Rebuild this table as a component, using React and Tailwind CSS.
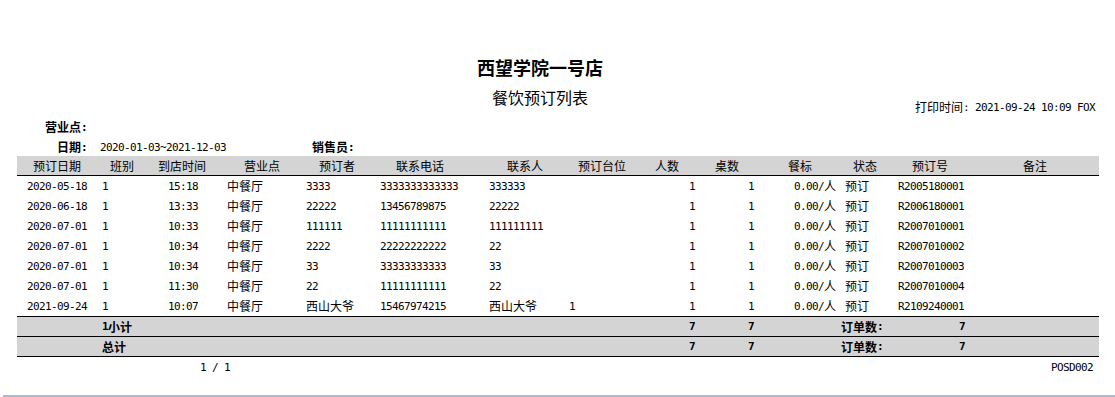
import React from "react";

const MONO = "font-['DejaVu_Sans_Mono',monospace] text-[11px] tracking-[-0.62px] leading-none whitespace-pre";
const CJK = "font-['Noto_Sans_CJK_SC',sans-serif] text-[12px] leading-none whitespace-pre";

function T({ s }) {
  const runs = [];
  let cur = "";
  let curA = null;
  for (const ch of s) {
    const a = ch.charCodeAt(0) < 128;
    if (curA === null || a === curA) {
      cur += ch;
      curA = a;
    } else {
      runs.push([cur, curA]);
      cur = ch;
      curA = a;
    }
  }
  if (cur) runs.push([cur, curA]);
  return (
    <>
      {runs.map(([t, a], i) => (
        <span key={i} className={a ? MONO : CJK}>
          {t}
        </span>
      ))}
    </>
  );
}

const rows = [
  ["2020-05-18", "1", "15:18", "中餐厅", "3333", "3333333333333", "333333", "", "1", "1", "0.00/人", "预订", "R2005180001"],
  ["2020-06-18", "1", "13:33", "中餐厅", "22222", "13456789875", "22222", "", "1", "1", "0.00/人", "预订", "R2006180001"],
  ["2020-07-01", "1", "10:33", "中餐厅", "111111", "11111111111", "111111111", "", "1", "1", "0.00/人", "预订", "R2007010001"],
  ["2020-07-01", "1", "10:34", "中餐厅", "2222", "22222222222", "22", "", "1", "1", "0.00/人", "预订", "R2007010002"],
  ["2020-07-01", "1", "10:34", "中餐厅", "33", "33333333333", "33", "", "1", "1", "0.00/人", "预订", "R2007010003"],
  ["2020-07-01", "1", "11:30", "中餐厅", "22", "11111111111", "22", "", "1", "1", "0.00/人", "预订", "R2007010004"],
  ["2021-09-24", "1", "10:07", "中餐厅", "西山大爷", "15467974215", "西山大爷", "1", "1", "1", "0.00/人", "预订", "R2109240001"],
];

const dataCells = [
  "w-[80px] pl-[10px]",
  "w-[50px] pl-[5px]",
  "w-[70px] pr-[19px] justify-end",
  "w-[83px] pl-[10px]",
  "w-[77px] pl-[6px]",
  "w-[110px] pl-[3px]",
  "w-[76px] pl-[2px]",
  "w-[77px] pl-[6px]",
  "w-[55px] justify-end",
  "w-[59px] justify-end",
  "w-[88px] pl-[40px]",
  "w-[55px] pl-[3px]",
  "flex-1 pl-[1px]",
];

const headers = [
  ["预订日期", "w-[80px]"],
  ["班别", "w-[50px]"],
  ["到店时间", "w-[70px]"],
  ["营业点", "w-[90px]"],
  ["预订者", "w-[60px]"],
  ["联系电话", "w-[106px]"],
  ["联系人", "w-[104px]"],
  ["预订台位", "w-[50px]"],
  ["人数", "w-[80px]"],
  ["桌数", "w-[40px]"],
  ["餐标", "w-[106px]"],
  ["状态", "w-[24px]"],
  ["预订号", "w-[106px]"],
  ["备注", "w-[104px]"],
];

function SummaryRow({ label, top }) {
  return (
    <div
      className={
        "flex items-center bg-[#d4d4d4] border-b border-black font-bold " +
        (top ? "border-t h-[21px]" : "h-[20px]")
      }
    >
      <div className="w-[85px] shrink-0" />
      <div className="w-[538px] shrink-0 flex items-center">
        <T s={label} />
      </div>
      <div className="w-[55px] shrink-0 flex items-center justify-end">
        <T s="7" />
      </div>
      <div className="w-[59px] shrink-0 flex items-center justify-end">
        <T s="7" />
      </div>
      <div className="w-[87px] shrink-0" />
      <div className="w-[70px] shrink-0 flex items-center">
        <T s="订单数:" />
      </div>
      <div className="w-[54px] shrink-0 flex items-center justify-end">
        <T s="7" />
      </div>
    </div>
  );
}

export default function App() {
  return (
    <div className="w-[1115px] h-[397px] bg-white text-black overflow-hidden flex flex-col font-['Noto_Sans_CJK_SC',sans-serif]">
      {/* Title */}
      <div className="flex mt-[57px] h-[20px] items-center">
        <div className="w-[360px] shrink-0" />
        <div className="w-[360px] shrink-0 text-center text-[18px] leading-none font-bold">西望学院一号店</div>
      </div>

      {/* Subtitle + print time */}
      <div className="flex mt-[10px] items-start">
        <div className="w-[360px] shrink-0" />
        <div className="w-[360px] shrink-0 h-[20px] flex items-center justify-center text-[16px] leading-none">
          餐饮预订列表
        </div>
        <div className="flex-1 flex justify-end pr-[20px] mt-[13px] h-[14px] items-center">
          <T s="打印时间: 2021-09-24 10:09 FOX" />
        </div>
      </div>

      {/* 营业点 */}
      <div className="flex items-center h-[14px] mt-[6px] font-bold">
        <div className="w-[87px] shrink-0 flex items-center justify-end">
          <T s="营业点:" />
        </div>
      </div>

      {/* 日期 / 销售员 */}
      <div className="flex items-center h-[14px] mt-[6px]">
        <div className="w-[87px] shrink-0 flex items-center justify-end font-bold">
          <T s="日期:" />
        </div>
        <div className="w-[225px] shrink-0 pl-[13px] flex items-center">
          <T s="2020-01-03~2021-12-03" />
        </div>
        <div className="flex items-center font-bold">
          <T s="销售员:" />
        </div>
      </div>

      {/* Table */}
      <div className="ml-[17px] w-[1082px] mt-[2px] flex flex-col">
        <div className="flex items-center h-[20px] bg-[#d4d4d4] border-b border-black">
          {headers.map(([h, w], i) => (
            <div key={i} className={w + " shrink-0 text-center whitespace-nowrap " + CJK}>
              {h}
            </div>
          ))}
        </div>

        {rows.map((r, ri) => (
          <div key={ri} className="flex items-center h-[20px]">
            {r.map((c, ci) => (
              <div key={ci} className={dataCells[ci] + " shrink-0 flex items-center"}>
                <T s={c} />
              </div>
            ))}
          </div>
        ))}

        <SummaryRow label="1小计" top />
        <SummaryRow label="总计" />

        {/* Footer */}
        <div className="flex items-center h-[14px] mt-[3px]">
          <div className="pl-[183px] flex items-center">
            <T s="1 / 1" />
          </div>
          <div className="flex-1" />
          <div className="pr-[6px] flex items-center">
            <T s="POSD002" />
          </div>
        </div>
      </div>

      <div className="mt-[21px] ml-[3px] h-[2px] bg-[#aeb9cb]" />
    </div>
  );
}
